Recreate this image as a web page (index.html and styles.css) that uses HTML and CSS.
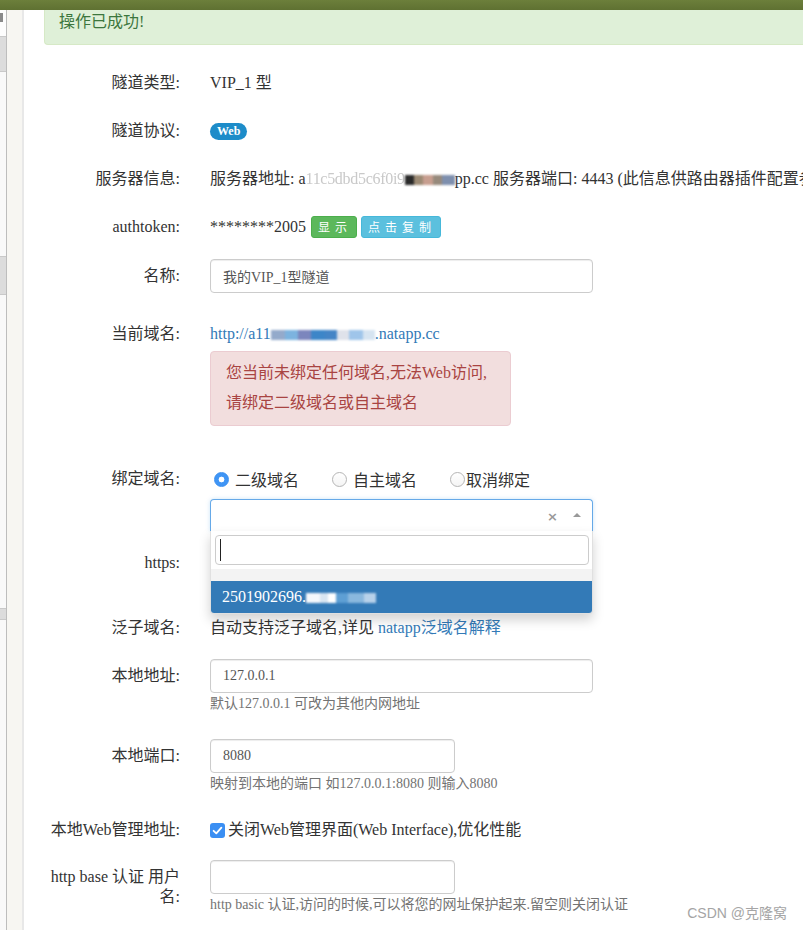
FILE: index.html
```html
<!DOCTYPE html>
<html lang="zh-CN">
<head>
<meta charset="utf-8">
<title>隧道配置</title>
<link rel="stylesheet" href="styles.css">
</head>
<body>
<div class="topbar"></div>
<div class="layout">
  <aside class="sidebar">
    <div class="sb-item sb-first"><span class="sb-icon"></span></div>
    <div class="sb-item sb-dark sb-h36"></div>
    <div class="sb-item sb-h184"></div>
    <div class="sb-item sb-dark sb-h39"></div>
    <div class="sb-item sb-h313"></div>
    <div class="sb-item sb-dark sb-h12"></div>
    <div class="sb-rest"></div>
  </aside>
  <div class="paper"></div>
  <main class="main">
    <div class="alert-success">操作已成功!</div>
    <form class="form">
      <div class="row gap-14">
        <div class="label">隧道类型:</div>
        <div class="value"><div class="text">VIP_1 型</div></div>
      </div>
      <div class="row gap-14">
        <div class="label">隧道协议:</div>
        <div class="value"><div class="text"><span class="badge">Web</span></div></div>
      </div>
      <div class="row gap-14">
        <div class="label">服务器信息:</div>
        <div class="value"><div class="text">服务器地址: a<span class="faint">11c5dbd5c6f0i9</span><span class="mosaic mosaic-dark"></span>pp.cc 服务器端口: 4443 (此信息供路由器插件配置参考)</div></div>
      </div>
      <div class="row gap-15">
        <div class="label">authtoken:</div>
        <div class="value"><div class="text">********2005<span class="btn btn-success">显示</span><span class="btn btn-info">点击复制</span></div></div>
      </div>
      <div class="row gap-24">
        <div class="label">名称:</div>
        <div class="value"><input class="input input-lg" type="text" value="我的VIP_1型隧道"></div>
      </div>
      <div class="row gap-36">
        <div class="label">当前域名:</div>
        <div class="value">
          <div class="text"><a class="link" href="#">http://a11<span class="mosaic mosaic-blue"></span>.natapp.cc</a></div>
          <div class="alert-danger">您当前未绑定任何域名,无法Web访问,<br>请绑定二级域名或自主域名</div>
        </div>
      </div>
      <div class="row gap-15">
        <div class="label">绑定域名:</div>
        <div class="value">
          <div class="radios">
            <span class="radio radio-checked r1"></span><span class="radio-text t1">二级域名</span>
            <span class="radio r2"></span><span class="radio-text t2">自主域名</span>
            <span class="radio r3"></span><span class="radio-text t3">取消绑定</span>
          </div>
          <div class="select">
            <div class="select-box">
              <span class="select-clear">×</span>
              <span class="select-arrow"></span>
            </div>
            <div class="select-dropdown">
              <div class="select-search"><div class="search-input"><span class="caret"></span></div></div>
              <div class="select-spacer"></div>
              <div class="select-item">2501902696.<span class="mosaic mosaic-white"></span></div>
            </div>
          </div>
        </div>
      </div>
      <div class="row gap-31">
        <div class="label">https:</div>
        <div class="value"></div>
      </div>
      <div class="row gap-14">
        <div class="label">泛子域名:</div>
        <div class="value"><div class="text">自动支持泛子域名,详见 <a class="link" href="#">natapp泛域名解释</a></div></div>
      </div>
      <div class="row gap-25">
        <div class="label">本地地址:</div>
        <div class="value">
          <input class="input input-lg" type="text" value="127.0.0.1">
          <div class="help">默认127.0.0.1 可改为其他内网地址</div>
        </div>
      </div>
      <div class="row gap-19">
        <div class="label">本地端口:</div>
        <div class="value">
          <input class="input input-sm" type="text" value="8080">
          <div class="help">映射到本地的端口 如127.0.0.1:8080 则输入8080</div>
        </div>
      </div>
      <div class="row gap-13">
        <div class="label">本地Web管理地址:</div>
        <div class="value">
          <div class="text"><span class="checkbox"><svg viewBox="0 0 15 15" width="15" height="15"><path d="M3.6 7.8 L6.3 10.4 L11.4 4.6" fill="none" stroke="#fff" stroke-width="1.8" stroke-linecap="round" stroke-linejoin="round"/></svg></span>关闭Web管理界面(Web Interface),优化性能</div>
        </div>
      </div>
      <div class="row">
        <div class="label">http base 认证 用户名:</div>
        <div class="value">
          <input class="input input-sm" type="text" value="">
          <div class="help">http basic 认证,访问的时候,可以将您的网址保护起来.留空则关闭认证</div>
        </div>
      </div>
    </form>
  </main>
</div>
<div class="watermark">CSDN @克隆窝</div>
</body>
</html>
```

FILE: styles.css
```css
* { box-sizing: border-box; }
html, body { margin: 0; }
body {
  width: 803px;
  height: 930px;
  overflow: hidden;
  position: relative;
  background: #fff;
  color: #333;
  font-family: "Liberation Serif", "Noto Sans CJK SC", serif;
  font-size: 16px;
}
.topbar { height: 10px; background: linear-gradient(#6c7f3b, #5f7132); }
.layout { display: flex; height: 920px; }

.sidebar {
  width: 7px; flex: none; background: #f9f9f9;
  border-right: 1px solid #bdbdbd;
  display: flex; flex-direction: column;
}
.sb-item { flex: none; }
.sb-first { height: 26px; background: #fdfdfd; padding-top: 3px; }
.sb-icon { display: block; width: 3px; height: 9px; background: #8a8a8a; }
.sb-dark { background: #dcdcdc; border-top: 1px solid #c9c9c9; border-bottom: 1px solid #c9c9c9; }
.sb-h36 { height: 36px; }
.sb-h184 { height: 184px; }
.sb-h39 { height: 39px; }
.sb-h313 { height: 313px; }
.sb-h12 { height: 12px; }
.sb-rest { flex: 1; }

.paper {
  width: 17px; flex: none;
  background: #f7f6f2;
  border-right: 2px solid #e8e8e8;
}
.main { flex: 1; min-width: 0; padding-left: 20px; overflow: hidden; }

.alert-success {
  height: 35px;
  padding: 2px 0 0 14px;
  line-height: 20px;
  background: #dff0d8;
  color: #3c763d;
  border-left: 1px solid #d6e9c6;
  border-bottom: 1px solid #d6e9c6;
  border-bottom-left-radius: 4px;
  white-space: nowrap;
}

.form { margin-top: 21px; }
.row { display: flex; align-items: flex-start; }
.gap-13 { margin-bottom: 13px; }
.gap-14 { margin-bottom: 14px; }
.gap-15 { margin-bottom: 15px; }
.gap-19 { margin-bottom: 19px; }
.gap-24 { margin-bottom: 24px; }
.gap-25 { margin-bottom: 25px; }
.gap-31 { margin-bottom: 31px; }
.gap-36 { margin-bottom: 36px; }

.label {
  width: 136px; flex: none;
  text-align: right;
  padding-top: 7px;
  line-height: 20px;
  min-height: 34px;
}
.value { margin-left: 30px; min-width: 0; }
.text {
  padding: 7px 0;
  height: 34px;
  line-height: 20px;
  white-space: nowrap;
}

.badge {
  display: inline-block;
  vertical-align: top;
  background: #1d8cc9;
  color: #fff;
  font-weight: bold;
  font-size: 12px;
  line-height: 17px;
  height: 17px;
  padding: 0 7px;
  border-radius: 9px;
  margin-top: 2px;
}

.faint { color: #c9c9c9; filter: blur(0.7px); letter-spacing: -0.3px; }
.mosaic { display: inline-block; height: 10px; filter: blur(0.8px); vertical-align: middle; }
.mosaic-dark {
  width: 50px;
  background: linear-gradient(90deg, #2a2a2a 0 9px, #9c8a74 9px 18px, #c79e8f 18px 28px, #978a7c 28px 37px, #7e8fae 37px 50px);
}
.mosaic-blue {
  width: 104px;
  background: linear-gradient(90deg, #94aacb 0 14px, #7cb3df 14px 27px, #7c86bd 27px 40px, #3d86c8 40px 54px, #4585c6 54px 66px, #dfe2ea 66px 78px, #9fc5ea 78px 92px, #d6e4f1 92px 104px);
}
.mosaic-white {
  width: 70px;
  background: linear-gradient(90deg, #f4f8fc 0 14px, #d9e6f2 14px 22px, #ffffff 22px 30px, #5e9fd4 30px 42px, #8ab8de 42px 58px, #b7d1ea 58px 70px);
}

.btn {
  display: inline-block;
  vertical-align: top;
  margin-top: -1px;
  height: 22px;
  line-height: 20px;
  padding: 0 4px 0 6px;
  border: 1px solid transparent;
  border-radius: 3px;
  color: #fff;
  font-family: "Noto Sans CJK SC", sans-serif;
  font-size: 12px;
  letter-spacing: 5px;
}
.btn-success { background: #5cb85c; border-color: #4cae4c; margin-left: 5px; }
.btn-info { background: #5bc0de; border-color: #46b8da; margin-left: 4px; }

.input {
  display: block;
  height: 34px;
  padding: 6px 12px;
  border: 1px solid #ccc;
  border-radius: 4px;
  box-shadow: inset 0 1px 1px rgba(0,0,0,.075);
  font-family: "Liberation Serif", "Noto Sans CJK SC", serif;
  font-size: 14px;
  line-height: 20px;
  color: #555;
  background: #fff;
  outline: none;
}
.input-lg { width: 383px; }
.input-sm { width: 245px; }

.help {
  margin-top: 1px;
  font-size: 14px;
  line-height: 20px;
  color: #737373;
  white-space: nowrap;
}

.link { color: #337ab7; text-decoration: none; }

.alert-danger {
  width: 301px;
  padding: 6px 15px 7px;
  background: #f2dede;
  border: 1px solid #ebccd1;
  border-radius: 4px;
  color: #a94442;
  line-height: 30px;
  white-space: nowrap;
}

.radios { display: flex; align-items: center; height: 34px; margin-bottom: 3px; }
.radio {
  width: 15px; height: 15px; flex: none;
  border-radius: 50%;
  border: 1px solid #b5b5b5;
  background: linear-gradient(#fff, #f4f4f4);
}
.radio-checked {
  border-color: #3a8ff0;
  background: radial-gradient(circle, #fff 0 2.6px, #3f95f5 3.2px);
}
.r1 { margin-left: 4px; }
.t1 { margin-left: 6px; }
.r2 { margin-left: 33px; }
.t2 { margin-left: 6px; }
.r3 { margin-left: 33px; }
.t3 { margin-left: 1px; }
.radio-text { white-space: nowrap; }

.select { position: relative; width: 383px; }
.select-box {
  height: 32px;
  border: 1px solid #66a9e8;
  border-bottom: none;
  border-radius: 4px 4px 0 0;
  background: #fff;
  display: flex; align-items: center; justify-content: flex-end;
  padding-right: 11px;
  box-shadow: 0 0 4px rgba(102,175,233,.35);
}
.select-clear {
  font-family: "DejaVu Sans", sans-serif;
  font-weight: bold;
  font-size: 13px;
  color: #999;
  line-height: 1;
  margin-right: 15px;
  margin-top: 1px;
}
.select-arrow {
  width: 0; height: 0;
  border-left: 4px solid transparent;
  border-right: 4px solid transparent;
  border-bottom: 4px solid #999;
  margin-top: -2px;
}
.select-dropdown {
  position: absolute;
  left: 0; right: 0; top: 32px;
  z-index: 5;
  background: #fff;
  border: 1px solid rgba(0,0,0,.12);
  border-top: none;
  border-radius: 0 0 4px 4px;
  box-shadow: 0 6px 12px rgba(0,0,0,.175);
}
.select-search { padding: 4px 3px 4px 4px; }
.search-input {
  height: 30px;
  border: 1px solid #ccc;
  border-radius: 4px;
  display: flex; align-items: center;
  padding-left: 4px;
}
.caret { width: 1px; height: 22px; background: #222; }
.select-spacer { height: 12px; background: #f3f3f3; }
.select-item {
  height: 32px;
  line-height: 32px;
  padding-left: 11px;
  background: #337ab7;
  color: #fff;
  border-radius: 0 0 3px 3px;
  white-space: nowrap;
}

.checkbox {
  display: inline-block;
  vertical-align: top;
  width: 15px; height: 15px;
  border-radius: 3px;
  background: #3b8ff3;
  margin-right: 3px;
  margin-top: 3px;
}
.checkbox svg { display: block; }

.watermark {
  position: absolute;
  right: 16px;
  top: 903px;
  font-family: "Liberation Sans", "Noto Sans CJK SC", sans-serif;
  font-size: 14px;
  line-height: 20px;
  color: #a5a5a5;
}
```
